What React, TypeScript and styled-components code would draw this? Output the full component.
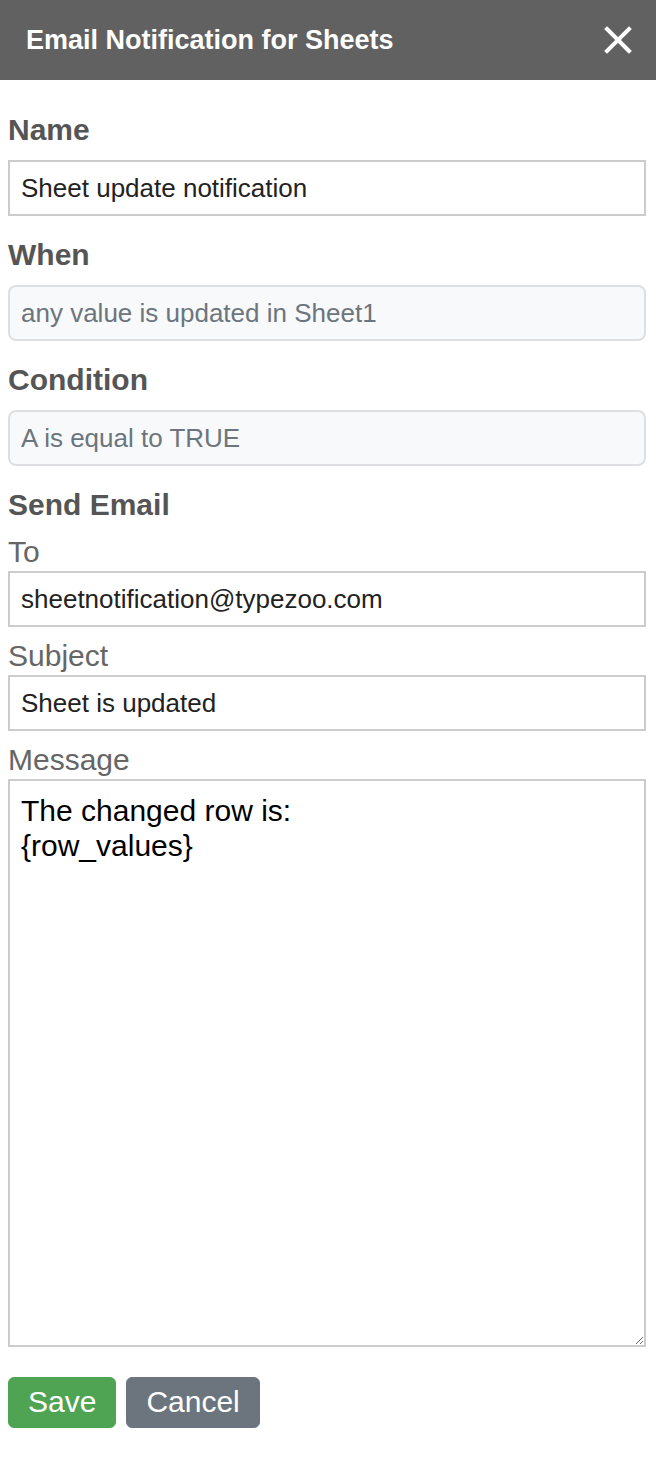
import React from "react";
import styled, { createGlobalStyle } from "styled-components";

const Global = createGlobalStyle`
  html, body { margin: 0; padding: 0; background: #fff; }
  body { font-family: "Liberation Sans", Arial, Helvetica, sans-serif; }
  * { box-sizing: border-box; }
`;

const Header = styled.header`
  height: 80px;
  background: #616161;
  display: flex;
  align-items: center;
  justify-content: space-between;
  padding: 0 24px 0 26px;
`;

const Title = styled.h1`
  margin: 0;
  font-size: 27px;
  font-weight: bold;
  color: #fff;
  line-height: 1;
`;

const CloseButton = styled.button`
  border: 0;
  background: none;
  padding: 0;
  width: 28px;
  height: 28px;
  display: flex;
  cursor: pointer;
`;

const Body = styled.main`
  padding: 0 10px 0 8px;
`;

const SectionLabel = styled.div<{ $first?: boolean; $tight?: boolean }>`
  font-size: 30px;
  font-weight: bold;
  color: #555;
  line-height: 36px;
  margin: ${(p) => (p.$first ? "32px" : "21px")} 0 ${(p) => (p.$tight ? "0" : "12px")};
`;

const FieldLabel = styled.label`
  display: block;
  font-size: 30px;
  color: #666;
  line-height: 36px;
  padding: 11px 0 1px;
`;

const TextInput = styled.input<{ $muted?: boolean }>`
  display: block;
  width: 100%;
  height: 56px;
  margin: 0;
  padding: 0 11px;
  font-family: "Liberation Sans", Arial, Helvetica, sans-serif;
  font-size: 26px;
  color: ${(p) => (p.$muted ? "#6c757d" : "#222")};
  background: ${(p) => (p.$muted ? "#f8f9fa" : "#fff")};
  border: 2px solid ${(p) => (p.$muted ? "#dddfe2" : "#ccc")};
  border-radius: ${(p) => (p.$muted ? "8px" : "0")};
  outline: none;
`;

const MessageArea = styled.textarea`
  display: block;
  width: 100%;
  height: 568px;
  margin: 0;
  padding: 12px 11px;
  font-family: "Liberation Sans", Arial, Helvetica, sans-serif;
  font-size: 30px;
  line-height: 35px;
  color: #000;
  border: 2px solid #ccc;
  border-radius: 0;
  resize: vertical;
  outline: none;
`;

const Actions = styled.div`
  display: flex;
  gap: 10px;
  margin-top: 30px;
`;

const Button = styled.button<{ $variant: "save" | "cancel" }>`
  font-family: "Liberation Sans", Arial, Helvetica, sans-serif;
  font-size: 30px;
  line-height: 45px;
  padding: 1px 19px 3px;
  border: 1px solid ${(p) => (p.$variant === "save" ? "#4fa453" : "#6c757d")};
  background: ${(p) => (p.$variant === "save" ? "#4fa453" : "#6c757d")};
  color: #fff;
  border-radius: 6px;
  cursor: pointer;
`;

export default function App() {
  return (
    <>
      <Global />
      <Header>
        <Title>Email Notification for Sheets</Title>
        <CloseButton aria-label="Close">
          <svg width="28" height="28" viewBox="0 0 28 28">
            <path d="M3 3 L25 25 M25 3 L3 25" stroke="#fff" strokeWidth="4" strokeLinecap="square" />
          </svg>
        </CloseButton>
      </Header>
      <Body>
        <SectionLabel $first>Name</SectionLabel>
        <TextInput defaultValue="Sheet update notification" />
        <SectionLabel>When</SectionLabel>
        <TextInput $muted readOnly defaultValue="any value is updated in Sheet1" />
        <SectionLabel>Condition</SectionLabel>
        <TextInput $muted readOnly defaultValue="A is equal to TRUE" />
        <SectionLabel $tight>Send Email</SectionLabel>
        <FieldLabel htmlFor="to">To</FieldLabel>
        <TextInput id="to" defaultValue="sheetnotification@typezoo.com" />
        <FieldLabel htmlFor="subject">Subject</FieldLabel>
        <TextInput id="subject" defaultValue="Sheet is updated" />
        <FieldLabel htmlFor="message">Message</FieldLabel>
        <MessageArea id="message" defaultValue={"The changed row is:\n{row_values}"} />
        <Actions>
          <Button $variant="save">Save</Button>
          <Button $variant="cancel">Cancel</Button>
        </Actions>
      </Body>
    </>
  );
}
